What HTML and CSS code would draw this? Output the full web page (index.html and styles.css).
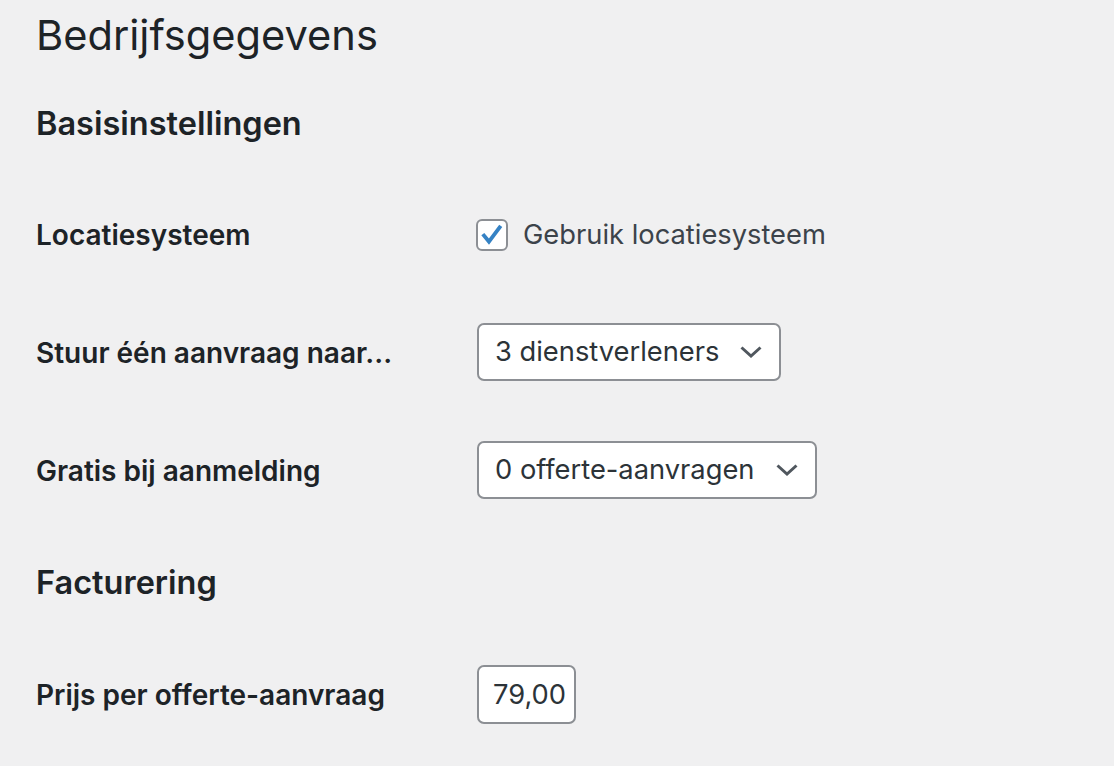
FILE: index.html
```html
<!DOCTYPE html>
<html lang="nl">
<head>
    <meta charset="UTF-8">
    <meta name="viewport" content="width=device-width, initial-scale=1.0">
    <link rel="stylesheet" href="styles.css">
</head>
<body>
    <div class="wrap">
        <h1 class="page-title">Bedrijfsgegevens</h1>

        <h2 class="section-title">Basisinstellingen</h2>
        <div class="form-table">
            <div class="form-row">
                <div class="form-label">Locatiesysteem</div>
                <div class="form-field">
                    <label class="check-label">
                        <span class="checkbox">
                            <svg viewBox="0 0 32 32" width="32" height="32"><polyline points="5.5,15 12.5,23.5 26,5.5" fill="none" stroke="#3582c4" stroke-width="4.4" stroke-linejoin="miter"/></svg>
                        </span>
                        Gebruik locatiesysteem
                    </label>
                </div>
            </div>
            <div class="form-row">
                <div class="form-label">Stuur één aanvraag naar...</div>
                <div class="form-field">
                    <div class="select select-providers">
                        <span>3 dienstverleners</span>
                        <svg class="chevron" viewBox="0 0 22 12" width="22" height="12"><polyline points="1.5,1.5 11,10 20.5,1.5" fill="none" stroke="#50575e" stroke-width="3"/></svg>
                    </div>
                </div>
            </div>
            <div class="form-row">
                <div class="form-label">Gratis bij aanmelding</div>
                <div class="form-field">
                    <div class="select select-free">
                        <span>0 offerte-aanvragen</span>
                        <svg class="chevron" viewBox="0 0 22 12" width="22" height="12"><polyline points="1.5,1.5 11,10 20.5,1.5" fill="none" stroke="#50575e" stroke-width="3"/></svg>
                    </div>
                </div>
            </div>
        </div>

        <h2 class="section-title">Facturering</h2>
        <div class="form-table">
            <div class="form-row">
                <div class="form-label">Prijs per offerte-aanvraag</div>
                <div class="form-field">
                    <input class="text-input" type="text" value="79,00">
                </div>
            </div>
        </div>
    </div>
</body>
</html>
```

FILE: styles.css
```css
body {
    background-color: #f0f0f1;
    color: #1d2327;
    font-family: Inter, "Noto Sans", sans-serif;
    margin: 0;
    padding: 0;
}
.wrap {
    padding: 7px 0 0 36px;
}
.page-title {
    font-size: 41.6px;
    font-weight: 400;
    line-height: 56px;
    margin: 0;
}
.section-title {
    font-size: 32.5px;
    font-weight: 600;
    line-height: 40px;
    margin: 41px 0 32px;
}
.form-table + .section-title {
    margin-top: 33px;
}
.form-row {
    display: flex;
    align-items: center;
    min-height: 58px;
    padding: 30px 0;
}
.form-label {
    width: 441px;
    flex-shrink: 0;
    font-size: 28px;
    font-weight: 600;
}
.form-field {
    display: flex;
    align-items: center;
    font-size: 27.3px;
}
.check-label {
    display: flex;
    align-items: center;
    gap: 15px;
    color: #3c434a;
    margin-left: -1px;
    margin-top: -1px;
}
.checkbox {
    display: flex;
    width: 28px;
    height: 28px;
    border: 2px solid #8c8f94;
    border-radius: 6px;
    background: #fff;
}
.checkbox svg {
    width: 28px;
    height: 28px;
}
.select {
    box-sizing: border-box;
    display: flex;
    align-items: center;
    justify-content: space-between;
    height: 58px;
    margin-top: -3px;
    padding: 0 17px 0 16px;
    border: 2px solid #8c8f94;
    border-radius: 7px;
    background: #fff;
    color: #2c3338;
}
.select-providers {
    width: 304px;
}
.select-free {
    width: 340px;
}
.chevron {
    flex-shrink: 0;
}
.text-input {
    box-sizing: border-box;
    width: 99px;
    height: 59px;
    padding: 0 0 0 14px;
    border: 2px solid #8c8f94;
    border-radius: 7px;
    background: #fff;
    color: #2c3338;
    font-family: inherit;
    font-size: 27.3px;
}
```
